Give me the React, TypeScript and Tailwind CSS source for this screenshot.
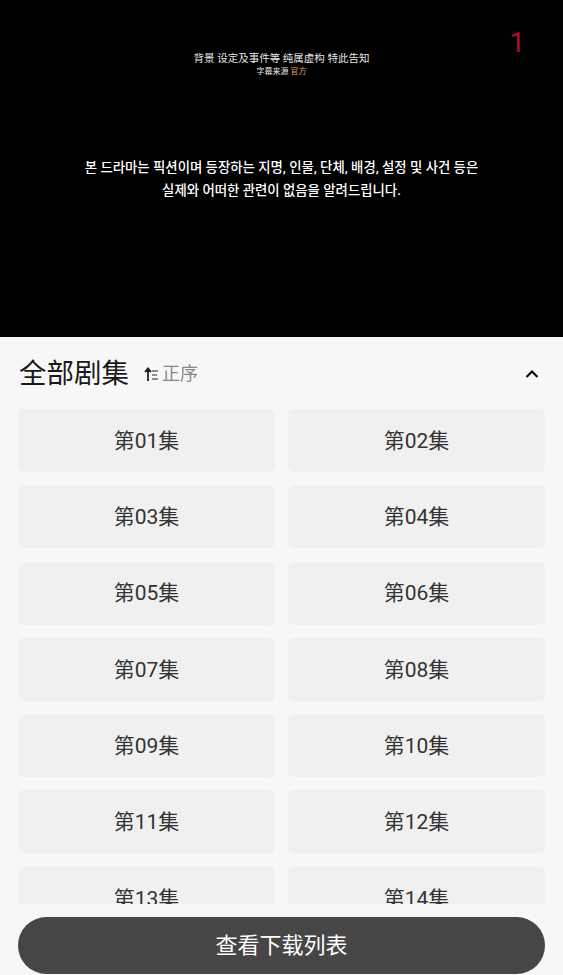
import * as React from 'react'

const episodes = Array.from({ length: 14 }, (_, i) => `第${String(i + 1).padStart(2, '0')}集`)

function SortIcon() {
  return (
    <svg width="15" height="15" viewBox="0 0 15 15" className="text-[#222]">
      <path d="M4 14V2M1 5l3-3.5L7 5" stroke="currentColor" strokeWidth="1.8" fill="currentColor" />
      <path d="M8 4h6M8 8h5M8 12h6" stroke="currentColor" strokeWidth="1.2" />
    </svg>
  )
}

function ChevronUp() {
  return (
    <svg width="16" height="16" viewBox="0 0 16 16">
      <path d="M2.5 11L8 5.5l5.5 5.5" stroke="#111" strokeWidth="2.2" fill="none" />
    </svg>
  )
}

export default function App() {
  return (
    <div
      className="w-[563px] h-[975px] flex flex-col bg-[#f7f7f7] overflow-hidden"
      style={{ fontFamily: 'Roboto, "Noto Sans CJK SC", "Noto Sans CJK KR", sans-serif' }}
    >
      <div className="relative h-[337px] bg-black shrink-0 flex flex-col items-center">
        <div className="absolute right-[38px] top-[30px] text-[27px] leading-none text-[#b3102b]">1</div>
        <div className="mt-[52px] text-[10.5px] leading-[14px] text-[#e8e8e8]">背景 设定及事件等 纯属虚构 特此告知</div>
        <div className="text-[8px] leading-[12px] text-[#e8e8e8]">
          字幕来源 <span className="text-[#e0a060]">官方</span>
        </div>
        <div className="mt-[78px] text-[13.4px] leading-[23px] text-white text-center font-medium">
          <div>본 드라마는 픽션이며 등장하는 지명, 인물, 단체, 배경, 설정 및 사건 등은</div>
          <div>실제와 어떠한 관련이 없음을 알려드립니다.</div>
        </div>
      </div>

      <div className="flex items-center h-[72px] px-[19px] shrink-0 pt-[2px]">
        <span className="text-[27.5px] text-[#1a1a1a] leading-none">全部剧集</span>
        <span className="ml-[15px] flex items-center text-[18px] text-[#888] leading-none">
          <SortIcon />
          <span className="ml-[3px]">正序</span>
        </span>
        <span className="ml-auto mr-[4px]">
          <ChevronUp />
        </span>
      </div>

      <div className="h-[495px] overflow-hidden px-[18px] shrink-0">
        <div className="grid grid-cols-2 gap-x-[13px] gap-y-[13.3px]">
          {episodes.map(ep => (
            <div
              key={ep}
              className="h-[63px] pt-[2px] rounded-[6px] bg-[#f0f0f0] flex items-center justify-center text-[21px] text-[#333]"
            >
              {ep}
            </div>
          ))}
        </div>
      </div>

      <div className="px-[18px] pt-[13px]">
        <button className="w-full h-[57px] rounded-full bg-[#464646] text-white text-[22px]">查看下载列表</button>
      </div>
    </div>
  )
}
